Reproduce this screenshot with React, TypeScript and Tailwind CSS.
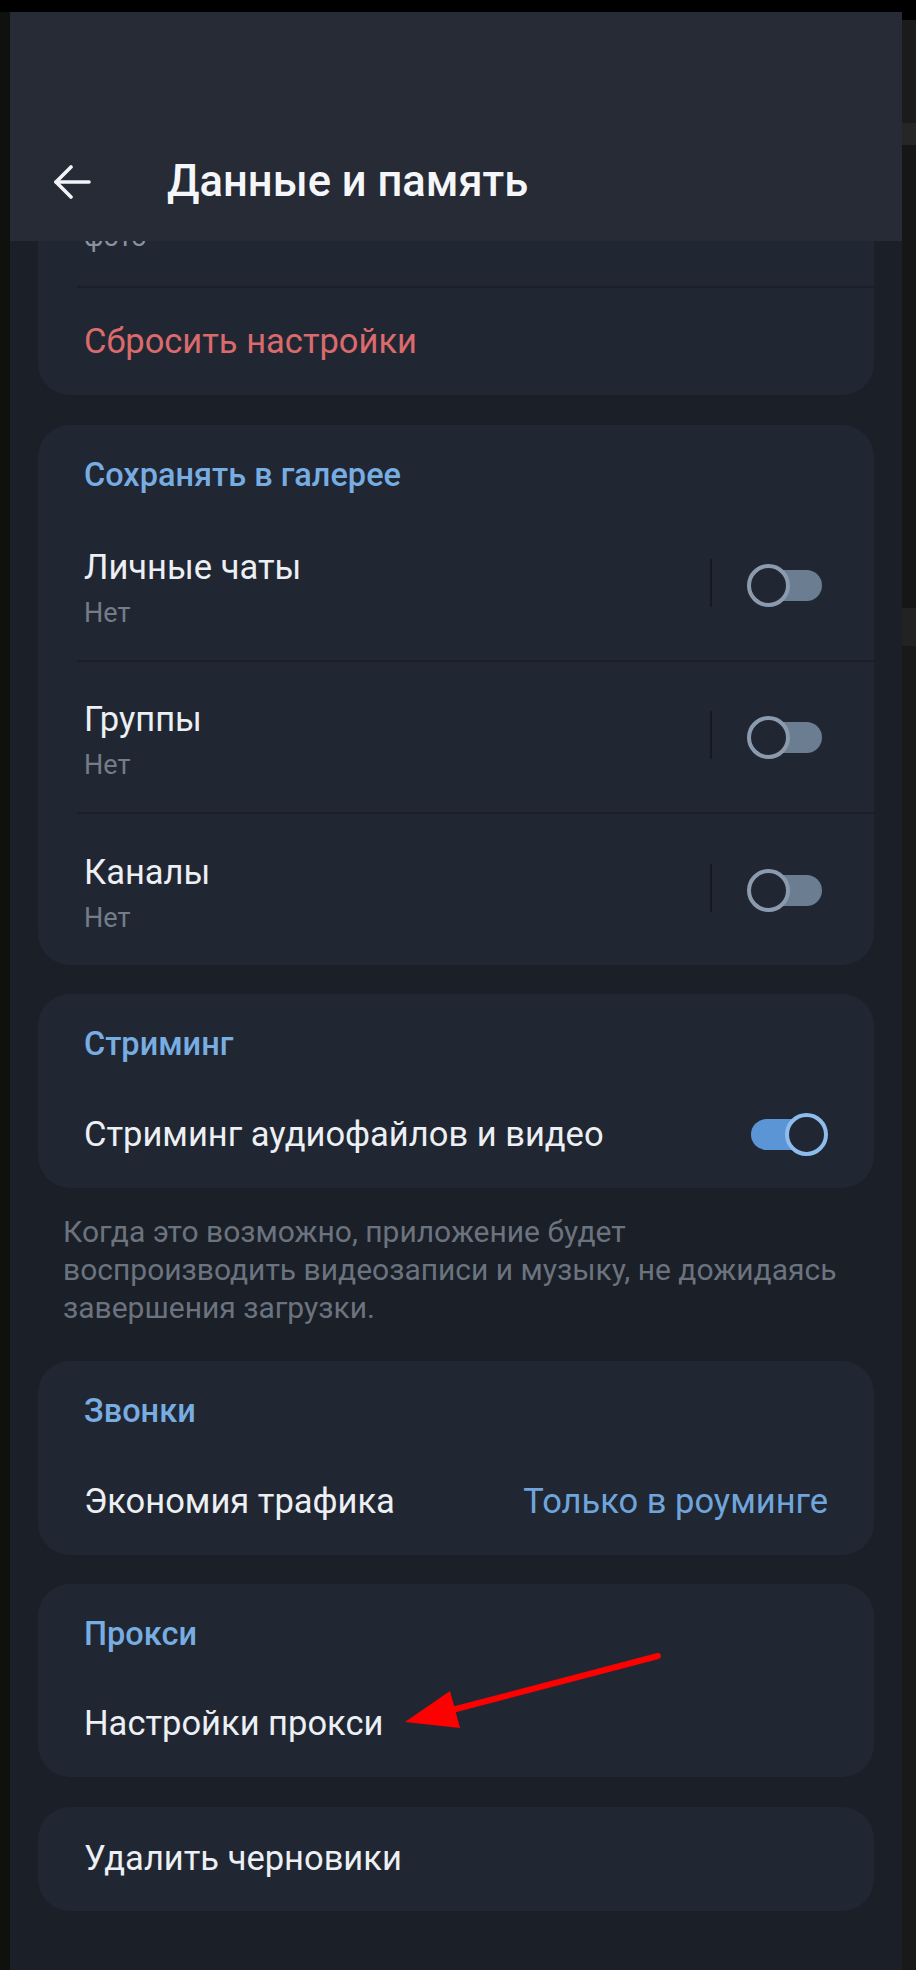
import React from 'react';

function BackArrow() {
  return (
    <svg width="38" height="34" viewBox="0 0 38 34" fill="none" stroke="#f2f4f7" strokeWidth="3.6" strokeLinecap="round" strokeLinejoin="round">
      <path d="M36 17H3" />
      <path d="M18 2L3 17l15 15" />
    </svg>
  );
}

function Toggle({ on }: { on?: boolean }) {
  if (on) {
    return (
      <div className="relative w-[77px] h-[43px] shrink-0">
        <div className="absolute left-0 top-[6px] w-[56px] h-[31px] rounded-full bg-[#5b95d6]" />
        <div className="absolute right-0 top-0 w-[43px] h-[43px] rounded-full border-[4px] border-[#8dbcee] bg-[#212732]" />
      </div>
    );
  }
  return (
    <div className="relative w-[75px] h-[43px] shrink-0">
      <div className="absolute right-0 top-[6px] w-[56px] h-[31px] rounded-full bg-[#6a7d91]" />
      <div className="absolute left-0 top-0 w-[43px] h-[43px] rounded-full border-[4px] border-[#8b9bad] bg-[#212732]" />
    </div>
  );
}

function SectionTitle({ children }: { children: React.ReactNode }) {
  return (
    <div className="h-[87px] pl-[46px] pt-[36px]">
      <p className="text-[32.5px] leading-[28px] font-medium text-[#78ade2]">{children}</p>
    </div>
  );
}

function SwitchRow({ title, value }: { title: string; value: string }) {
  return (
    <div className="h-[150px] flex items-center pl-[46px] pr-[52px]">
      <div className="flex-1 pt-[6px]">
        <p className="text-[34.5px] leading-[34px] text-[#eceff3]">{title}</p>
        <p className="mt-[15px] text-[27px] leading-[28px] text-[#737c88]">{value}</p>
      </div>
      <div className="w-[2px] h-[48px] bg-[#151920] mr-[35px] mb-[4px]" />
      <Toggle />
    </div>
  );
}

function Divider() {
  return <div className="ml-[39px] h-[2px] bg-[#1a1e26]" />;
}

function Card({ children, className = '' }: { children: React.ReactNode; className?: string }) {
  return <div className={`rounded-[32px] bg-[#212732] flex flex-col ${className}`}>{children}</div>;
}

export default function App() {
  return (
    <div className="relative w-[916px] h-[1970px] bg-[#0f110f] overflow-hidden font-['Roboto',sans-serif]">
      <div className="h-[12px] bg-black" />
      <div className="flex h-[1958px] pl-[10px]">
        {/* основной экран */}
        <div className="relative w-[892px] h-full bg-[#1a1f28] overflow-hidden">
          <div className="absolute inset-x-0 top-0 z-10 h-[229px] bg-[#262b36] flex flex-col justify-end">
            <div className="h-[118px] flex items-center pl-[43px]">
              <BackArrow />
              <h1 className="ml-[76px] text-[43.5px] font-medium text-[#f4f6f9]">Данные и память</h1>
            </div>
          </div>

          <div className="flex flex-col px-[28px]">
            <Card className="h-[383px]">
              <div className="h-[274px] flex flex-col justify-end pl-[46px] pb-[34px]">
                <p className="text-[27px] leading-[30px] text-[#8a929d]">фото</p>
              </div>
              <Divider />
              <div className="h-[107px] flex items-center pl-[46px]">
                <p className="text-[34.5px] text-[#db6a6d]">Сбросить настройки</p>
              </div>
            </Card>

            <Card className="mt-[30px]">
              <div className="h-[85px] pl-[46px] pt-[36px]">
                <p className="text-[32.5px] leading-[28px] font-medium text-[#78ade2]">Сохранять в галерее</p>
              </div>
              <SwitchRow title="Личные чаты" value="Нет" />
              <Divider />
              <SwitchRow title="Группы" value="Нет" />
              <Divider />
              <div className="h-[1px]" />
              <SwitchRow title="Каналы" value="Нет" />
            </Card>

            <Card className="mt-[29px] h-[194px]">
              <SectionTitle>Стриминг</SectionTitle>
              <div className="h-[107px] flex items-center justify-between pl-[46px] pr-[46px]">
                <p className="text-[34.5px] text-[#eceff3]">Стриминг аудиофайлов и видео</p>
                <Toggle on />
              </div>
            </Card>

            <div className="pt-[25px] pb-[34px] pl-[25px] text-[30px] leading-[38px] text-[#6b737f]">
              <p>Когда это возможно, приложение будет</p>
              <p>воспроизводить видеозаписи и музыку, не дожидаясь</p>
              <p>завершения загрузки.</p>
            </div>

            <Card className="h-[194px]">
              <SectionTitle>Звонки</SectionTitle>
              <div className="h-[107px] flex items-center justify-between pl-[46px] pr-[46px]">
                <p className="text-[34.5px] text-[#eceff3]">Экономия трафика</p>
                <p className="text-[34.5px] text-[#6fa5dc]">Только в роуминге</p>
              </div>
            </Card>

            <Card className="mt-[29px] h-[193px]">
              <SectionTitle>Прокси</SectionTitle>
              <div className="h-[106px] flex items-center pl-[46px]">
                <p className="text-[34.5px] text-[#eceff3]">Настройки прокси</p>
              </div>
            </Card>

            <Card className="mt-[30px] h-[104px] justify-center">
              <p className="pl-[46px] text-[34.5px] text-[#eceff3]">Удалить черновики</p>
            </Card>
          </div>
        </div>

        {/* край соседнего окна */}
        <div className="flex-1 flex flex-col">
          <div className="h-[8px] bg-black" />
          <div className="h-[103px] bg-[#1b1b1b]" />
          <div className="h-[22px] bg-[#262626]" />
          <div className="h-[463px] bg-[#161616]" />
          <div className="h-[38px] bg-[#222222]" />
          <div className="flex-1 bg-[#191919]" />
        </div>
      </div>

      {/* красная стрелка */}
      <svg className="absolute left-0 top-0 pointer-events-none" width="916" height="1970" viewBox="0 0 916 1970">
        <line x1="658" y1="1656" x2="452" y2="1710" stroke="#ff0000" strokeWidth="6" strokeLinecap="round" />
        <polygon points="405,1722 450,1691 460,1728" fill="#ff0000" />
      </svg>
    </div>
  );
}
